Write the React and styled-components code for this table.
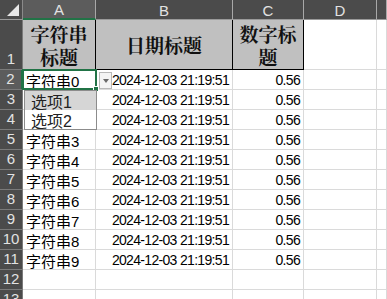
import React from "react";
import styled, { createGlobalStyle } from "styled-components";

const GlobalStyle = createGlobalStyle`
  body {
    margin: 0;
    background: #ffffff;
    overflow: hidden;
  }
`;

const GREEN = "#217346";
const GRID = "#dadada";

const rows = Array.from({ length: 10 }, (_, i) => ({
  text: `字符串${i}`,
  date: "2024-12-03 21:19:51",
  num: "0.56",
}));

const Sheet = styled.div`
  display: grid;
  grid-template-columns: 23px 73px 137px 71px 73px 10px;
  grid-template-rows: 20px 50px repeat(12, 20px);
  font-family: "Liberation Sans", "Noto Sans CJK SC", sans-serif;
`;

const Corner = styled.div`
  background: #4b4b4b;
  border-right: 1px solid #8a8a8a;
  border-bottom: 1px solid #9a9a9a;
  box-sizing: border-box;
  position: relative;
  &::after {
    content: "";
    position: absolute;
    right: 3px;
    bottom: 3px;
    width: 0;
    height: 0;
    border-left: 12px solid transparent;
    border-bottom: 12px solid #e8e8e8;
  }
`;

const ColHead = styled.div`
  background: ${(p) => (p.$active ? "#5c5c5c" : "#4b4b4b")};
  color: #e2e2e2;
  font-size: 15px;
  display: flex;
  align-items: center;
  justify-content: center;
  box-sizing: border-box;
  border-right: 1px solid #a8a8a8;
  border-bottom: ${(p) => (p.$active ? `2px solid ${GREEN}` : "1px solid #9a9a9a")};
  padding-top: 1px;
`;

const RowHead = styled.div`
  background: ${(p) => (p.$active ? "#5c5c5c" : "#4b4b4b")};
  color: #e2e2e2;
  font-size: 15px;
  display: flex;
  align-items: flex-end;
  justify-content: center;
  box-sizing: border-box;
  border-bottom: 1px solid #7a7a7a;
  border-right: ${(p) => (p.$active ? `2px solid ${GREEN}` : "1px solid #7a7a7a")};
  padding-bottom: 1px;
  line-height: 18px;
`;

const Cell = styled.div`
  position: relative;
  box-sizing: border-box;
  border-right: 1px solid ${GRID};
  border-bottom: 1px solid ${GRID};
  display: flex;
  align-items: center;
  justify-content: ${(p) => (p.$align === "right" ? "flex-end" : "flex-start")};
  padding: 1px 3px 0 3px;
  font-size: ${(p) => (p.$cjk ? "15px" : "14px")};
  letter-spacing: ${(p) => (p.$cjk ? "0" : "-0.68px")};
  color: #000;
  white-space: nowrap;
`;

const HeadCell = styled.div`
  box-sizing: border-box;
  background: #c0c0c0;
  border-right: 1px solid #000;
  border-bottom: 1px solid #000;
  display: flex;
  align-items: center;
  justify-content: center;
  text-align: center;
  font-family: "Noto Serif CJK SC", "Noto Sans CJK SC", serif;
  font-weight: 700;
  font-size: 19px;
  line-height: 23px;
  color: #111;
  padding: 0 2px;
`;

const Selection = styled.div`
  position: absolute;
  left: -1px;
  top: -1px;
  width: 75px;
  height: 21px;
  box-sizing: border-box;
  border: 2px solid ${GREEN};
  z-index: 2;
  pointer-events: none;
  &::after {
    content: "";
    position: absolute;
    right: -4px;
    bottom: -4px;
    width: 4px;
    height: 4px;
    background: ${GREEN};
    border: 1px solid #fff;
  }
`;

const DropButton = styled.div`
  position: absolute;
  left: 76px;
  top: 2px;
  width: 13px;
  height: 17px;
  box-sizing: border-box;
  background: #f4f4f4;
  border: 1px solid #b8b8b8;
  display: flex;
  align-items: center;
  justify-content: center;
  z-index: 2;
  &::before {
    content: "";
    width: 0;
    height: 0;
    border-left: 3.5px solid transparent;
    border-right: 3.5px solid transparent;
    border-top: 4px solid #6a6a6a;
  }
`;

const DropList = styled.div`
  position: absolute;
  left: 1px;
  top: 20px;
  width: 73px;
  height: 40px;
  box-sizing: border-box;
  background: #fff;
  border: 1px solid #8c8c8c;
  z-index: 3;
  display: flex;
  flex-direction: column;
`;

const Option = styled.div`
  height: 19px;
  display: flex;
  align-items: center;
  padding-left: 6px;
  font-size: 16px;
  color: #222;
  background: ${(p) => (p.$hover ? "#d6d6d6" : "transparent")};
`;

const Filler = styled.div`
  box-sizing: border-box;
  border-bottom: 1px solid ${GRID};
  border-right: 1px solid ${GRID};
`;

const App = () => {
  return (
    <>
      <GlobalStyle />
      <Sheet>
        <Corner />
        <ColHead $active>A</ColHead>
        <ColHead>B</ColHead>
        <ColHead>C</ColHead>
        <ColHead>D</ColHead>
        <ColHead />

        <RowHead>1</RowHead>
        <HeadCell>字符串<br />标题</HeadCell>
        <HeadCell>日期标题</HeadCell>
        <HeadCell>数字标<br />题</HeadCell>
        <Filler />
        <Filler />

        {rows.map((r, i) => (
          <React.Fragment key={r.text}>
            <RowHead $active={i === 0}>{i + 2}</RowHead>
            <Cell $cjk>
              {r.text}
              {i === 0 && (
                <>
                  <Selection />
                  <DropButton />
                  <DropList>
                    <Option $hover>选项1</Option>
                    <Option>选项2</Option>
                  </DropList>
                </>
              )}
            </Cell>
            <Cell $align="right">{r.date}</Cell>
            <Cell $align="right">{r.num}</Cell>
            <Filler />
            <Filler />
          </React.Fragment>
        ))}

        {[12, 13].map((n) => (
          <React.Fragment key={n}>
            <RowHead>{n}</RowHead>
            <Filler />
            <Filler />
            <Filler />
            <Filler />
            <Filler />
          </React.Fragment>
        ))}
      </Sheet>
    </>
  );
};

export default App;
